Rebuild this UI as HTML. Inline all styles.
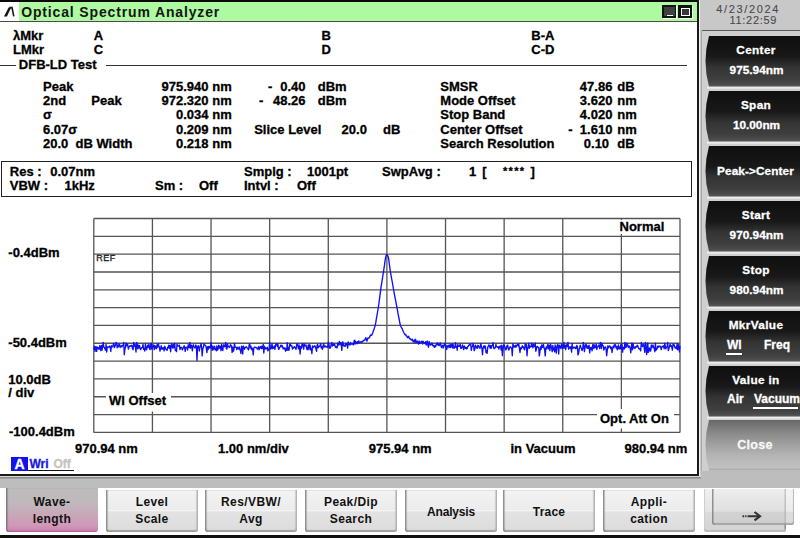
<!DOCTYPE html>
<html><head><meta charset="utf-8">
<style>
html,body{margin:0;padding:0;}
body{width:800px;height:538px;overflow:hidden;position:relative;background:#fff;font-family:"Liberation Sans",sans-serif;}
.t{position:absolute;white-space:pre;line-height:1;-webkit-text-stroke:0.3px currentColor;}
.abs{position:absolute;}
#topbar{left:0;top:0;width:697px;height:1.8px;background:#0c080c;}
#title{left:19px;top:1.8px;width:678px;height:19.4px;background:#adfaa0;}
#titleline{left:0;top:21.2px;width:697px;height:1.3px;background:#504a50;}
#icon{left:0;top:2px;width:19px;height:19px;background:#fff;}
#vborder{left:697px;top:0;width:2px;height:476px;background:#1a1a1a;}
#hborder{left:0;top:474px;width:699px;height:2px;background:#1a1a1a;}
#panel{left:699px;top:0;width:101px;height:488px;background:#c8c8c8;border-left:1px solid #f0f0f0;}
#frame{left:701px;top:30px;width:99px;height:441px;background:#cfcfcf;border-top:1.3px solid #5a5a5a;border-left:1px solid #a8a8a8;border-top-left-radius:2px;}
.sk{position:absolute;left:706px;width:94px;border-radius:14px 0 0 14px / 50% 0 0 50%;
  background:linear-gradient(#151515 0%,#1c1c1c 35%,#333 60%,#2a2a2a 85%,#4a4a4a 100%);color:#fff;text-align:center;font-weight:bold;font-size:12px;
  box-shadow:0 2px 0 #e6e6e6;}
.sk.light{background:linear-gradient(#7a7a7a 0%,#9a9a9a 35%,#b8b8b8 70%,#c4c4c4 100%);box-shadow:none;}
.sk .l1{position:absolute;left:0;right:0;top:9px;line-height:12px;}
.sk .l2{position:absolute;left:0;right:0;top:29px;line-height:12px;letter-spacing:0.3px;}
.sk .l0{position:absolute;left:0;right:0;top:19px;line-height:12px;}
.sk .l3{position:absolute;left:0;right:0;top:29px;line-height:12px;}
.sk .u{border-bottom:2px solid #fff;padding-bottom:1px;}
#band{left:0;top:476px;width:701px;height:12px;background:#bdbdbd;border-top:1px solid #dadada;box-sizing:border-box;box-shadow:inset 0 1.5px 0 #8a8a8a;}
#band2{left:701px;top:471px;width:99px;height:17px;background:#bdbdbd;}
#bottomline{left:0;top:535px;width:800px;height:3px;background:#111;}
.fb{position:absolute;top:489.5px;width:92px;height:42.5px;background:linear-gradient(#f3f3f3 0%,#ececec 47%,#f6f6f6 49%,#e3e3e3 52%,#dcdcdc 100%);
  border-radius:0 0 3px 3px;box-shadow:inset 1.5px 0 1px #8c8c8c, inset -1.5px 0 1px #b0b0b0, inset 0 -2px 1px #a0a0a0;font-weight:bold;font-size:12px;text-align:center;color:#111;}
.fb.sel{top:488px;height:43.5px;background:linear-gradient(#bdbdbd 0%,#c0b8bc 35%,#c8a8b8 60%,#d098b8 85%,#cc88b0 95%,#b85a98 100%);box-shadow:inset 1.5px 0 1px #7a7a7a;}
.fb .fl2{position:absolute;left:0;right:0;top:4.6px;line-height:17px;letter-spacing:0.4px;}
.fb.sel .fl2{top:5.8px;}
.fb .fl1{position:absolute;left:0;right:0;top:14.3px;line-height:17px;letter-spacing:0.2px;}
</style></head><body>
<div class="abs" id="topbar"></div>
<div class="abs" id="title"></div>
<div class="abs" id="icon"></div>
<div class="abs" id="titleline"></div>
<svg class="abs" style="left:0;top:0" width="20" height="22"><path d="M4 16.4 L6.9 16.4 L11.2 7.4 L8.6 7.4 Z" fill="#151515"/><path d="M9.5 7.6 L12 7.6 L13.8 16.4" fill="none" stroke="#151515" stroke-width="1.6"/></svg>
<div class="t" style="left:21.2px;top:5.2px;font-size:14px;font-weight:bold;letter-spacing:0.85px;color:#151515;-webkit-text-stroke:0">Optical Spectrum Analyzer</div>
<div class="abs" style="left:662px;top:5px;width:14px;height:12.5px;background:#111;box-shadow:1px 1px 0 #f4fff0"><div class="abs" style="left:1.5px;top:1.5px;width:11px;height:9.5px;background:#404040"></div><div class="abs" style="left:5px;top:9.8px;width:6px;height:1.5px;background:#fff"></div></div>
<div class="abs" style="left:678.3px;top:5px;width:14.2px;height:12.5px;background:#111;box-shadow:1px 1px 0 #f4fff0"><div class="abs" style="left:2.3px;top:2.8px;width:7.2px;height:6px;border:1.5px solid #fff;background:#383838"></div></div>
<div class="abs" id="vborder"></div>
<div class="abs" id="hborder"></div>
<div class="abs" id="panel"></div>
<div class="abs" id="frame"></div>
<div class="t" style="left:716.3px;top:3.6px;font-size:11px;color:#4a4a4a;letter-spacing:1.65px;-webkit-text-stroke:0.1px #4a4a4a">4/23/2024</div>
<div class="t" style="left:729.5px;top:14.9px;font-size:11px;color:#4a4a4a;letter-spacing:0.7px;-webkit-text-stroke:0.1px #4a4a4a">11:22:59</div>
<svg class="abs" style="left:0;top:0" width="800" height="538">
<defs>
<linearGradient id="gdark" x1="0" y1="0" x2="0" y2="1">
<stop offset="0" stop-color="#0f0f0f"/><stop offset="0.4" stop-color="#181818"/><stop offset="0.62" stop-color="#343434"/><stop offset="0.85" stop-color="#3e3e3e"/><stop offset="0.95" stop-color="#4a4a4a"/><stop offset="1" stop-color="#5a5a5a"/>
</linearGradient>
<linearGradient id="glight" x1="0" y1="0" x2="0" y2="1">
<stop offset="0" stop-color="#686868"/><stop offset="0.3" stop-color="#8e8e8e"/><stop offset="0.7" stop-color="#b4b4b4"/><stop offset="0.94" stop-color="#c0c0c0"/><stop offset="1" stop-color="#a8a8a8"/>
</linearGradient>
</defs>
<rect x="707" y="86.5" width="93" height="2.2" fill="#ececec"/>
<path d="M709 36 L800 36 L800 86.5 L709 86.5 Q702 61.25 709 36 Z" fill="url(#gdark)"/>
<rect x="707" y="141.5" width="93" height="2.2" fill="#ececec"/>
<path d="M709 91 L800 91 L800 141.5 L709 141.5 Q702 116.25 709 91 Z" fill="url(#gdark)"/>
<rect x="707" y="196.5" width="93" height="2.2" fill="#ececec"/>
<path d="M709 146 L800 146 L800 196.5 L709 196.5 Q702 171.25 709 146 Z" fill="url(#gdark)"/>
<rect x="707" y="251.5" width="93" height="2.2" fill="#ececec"/>
<path d="M709 201 L800 201 L800 251.5 L709 251.5 Q702 226.25 709 201 Z" fill="url(#gdark)"/>
<rect x="707" y="306.5" width="93" height="2.2" fill="#ececec"/>
<path d="M709 256 L800 256 L800 306.5 L709 306.5 Q702 281.25 709 256 Z" fill="url(#gdark)"/>
<rect x="707" y="361.5" width="93" height="2.2" fill="#ececec"/>
<path d="M709 311 L800 311 L800 361.5 L709 361.5 Q702 336.25 709 311 Z" fill="url(#gdark)"/>
<rect x="707" y="416.5" width="93" height="2.2" fill="#ececec"/>
<path d="M709 366 L800 366 L800 416.5 L709 416.5 Q702 391.25 709 366 Z" fill="url(#gdark)"/>

<path d="M709 420 L800 420 L800 470.5 L709 470.5 Q702 445.25 709 420 Z" fill="url(#glight)"/>
</svg>
<div class="t" style="left:656px;width:200px;top:45.20px;font-size:11.8px;font-weight:bold;color:#fff;text-align:center;letter-spacing:0.35px">Center</div>
<div class="t" style="left:656.5px;width:200px;top:65.20px;font-size:11.8px;font-weight:bold;color:#fff;text-align:center;">975.94nm</div>
<div class="t" style="left:656px;width:200px;top:100.20px;font-size:11.8px;font-weight:bold;color:#fff;text-align:center;letter-spacing:0.35px">Span</div>
<div class="t" style="left:656.5px;width:200px;top:120.20px;font-size:11.8px;font-weight:bold;color:#fff;text-align:center;">10.00nm</div>
<div class="t" style="left:655.5px;width:200px;top:166.00px;font-size:11.8px;font-weight:bold;color:#fff;text-align:center;letter-spacing:0.1px">Peak-&gt;Center</div>
<div class="t" style="left:656px;width:200px;top:210.20px;font-size:11.8px;font-weight:bold;color:#fff;text-align:center;letter-spacing:0.35px">Start</div>
<div class="t" style="left:656.5px;width:200px;top:230.20px;font-size:11.8px;font-weight:bold;color:#fff;text-align:center;">970.94nm</div>
<div class="t" style="left:656px;width:200px;top:265.20px;font-size:11.8px;font-weight:bold;color:#fff;text-align:center;letter-spacing:0.35px">Stop</div>
<div class="t" style="left:656.5px;width:200px;top:285.20px;font-size:11.8px;font-weight:bold;color:#fff;text-align:center;">980.94nm</div>
<div class="t" style="left:656px;width:200px;top:320.20px;font-size:11.8px;font-weight:bold;color:#fff;text-align:center;letter-spacing:0.35px">MkrValue</div>
<div class="t" style="left:727px;top:338.53px;font-size:12px;font-weight:bold;color:#fff;">Wl</div>
<div class="t" style="left:764px;top:338.53px;font-size:12px;font-weight:bold;color:#fff;">Freq</div>
<div class="abs" style="left:726px;top:352.5px;width:16px;height:2px;background:#fff"></div>
<div class="t" style="left:656px;width:200px;top:375.20px;font-size:11.8px;font-weight:bold;color:#fff;text-align:center;letter-spacing:0.35px">Value in</div>
<div class="t" style="left:727px;top:393.03px;font-size:12px;font-weight:bold;color:#fff;">Air</div>
<div class="t" style="left:754px;top:393.03px;font-size:12px;font-weight:bold;color:#fff;">Vacuum</div>
<div class="abs" style="left:753px;top:406.8px;width:45px;height:2px;background:#fff"></div>
<div class="t" style="left:655px;width:200px;top:438.62px;font-size:12.5px;font-weight:bold;color:#f6f6f6;text-align:center;letter-spacing:0.3px">Close</div>
<!-- header lines -->
<div class="abs" style="left:0;top:64.5px;width:16px;height:1px;background:#333"></div>
<div class="abs" style="left:106px;top:64.5px;width:581px;height:1px;background:#333"></div>
<!-- res box -->
<div class="abs" style="left:1.2px;top:160.6px;width:688.5px;height:34.3px;border:1.5px solid #222"></div>
<svg class="abs" style="left:0;top:0" width="700" height="474">
<g stroke="#555" stroke-width="1.3" fill="none">
<line x1="93.80" y1="218.5" x2="93.80" y2="432.4"/>
<line x1="152.42" y1="218.5" x2="152.42" y2="432.4"/>
<line x1="211.04" y1="218.5" x2="211.04" y2="432.4"/>
<line x1="269.66" y1="218.5" x2="269.66" y2="432.4"/>
<line x1="328.28" y1="218.5" x2="328.28" y2="432.4"/>
<line x1="386.90" y1="218.5" x2="386.90" y2="432.4"/>
<line x1="445.52" y1="218.5" x2="445.52" y2="432.4"/>
<line x1="504.14" y1="218.5" x2="504.14" y2="432.4"/>
<line x1="562.76" y1="218.5" x2="562.76" y2="432.4"/>
<line x1="621.38" y1="218.5" x2="621.38" y2="432.4"/>
<line x1="680.00" y1="218.5" x2="680.00" y2="432.4"/>
<line x1="93.8" y1="218.50" x2="680.0" y2="218.50"/>
<line x1="93.8" y1="236.32" x2="680.0" y2="236.32"/>
<line x1="93.8" y1="254.15" x2="680.0" y2="254.15"/>
<line x1="93.8" y1="271.98" x2="680.0" y2="271.98"/>
<line x1="93.8" y1="289.80" x2="680.0" y2="289.80"/>
<line x1="93.8" y1="307.62" x2="680.0" y2="307.62"/>
<line x1="93.8" y1="325.45" x2="680.0" y2="325.45"/>
<line x1="93.8" y1="343.27" x2="680.0" y2="343.27"/>
<line x1="93.8" y1="361.10" x2="680.0" y2="361.10"/>
<line x1="93.8" y1="378.92" x2="680.0" y2="378.92"/>
<line x1="93.8" y1="396.75" x2="680.0" y2="396.75"/>
<line x1="93.8" y1="414.57" x2="680.0" y2="414.57"/>
<line x1="93.8" y1="432.40" x2="680.0" y2="432.40"/>
</g>
<rect x="616" y="220" width="52" height="14" fill="#fff"/>
<rect x="106" y="393" width="65" height="18.5" fill="#fff"/>
<rect x="597" y="409" width="77" height="19.5" fill="#fff"/>
<polyline points="93.8,349.5 94.4,346.1 95.0,351.3 95.6,347.0 96.1,346.6 96.7,351.4 97.3,347.1 97.9,347.5 98.5,348.6 99.1,349.3 99.7,345.7 100.2,346.4 100.8,350.7 101.4,345.4 102.0,350.0 102.6,346.9 103.2,342.4 103.8,347.0 104.4,347.5 104.9,348.6 105.5,350.2 106.1,344.5 106.7,352.0 107.3,346.9 107.9,346.9 108.5,347.2 109.0,347.0 109.6,346.0 110.2,347.1 110.8,351.4 111.4,345.7 112.0,347.2 112.6,346.0 113.1,345.3 113.7,343.1 114.3,347.6 114.9,346.4 115.5,344.8 116.1,342.4 116.7,343.1 117.2,347.9 117.8,345.3 118.4,346.8 119.0,344.0 119.6,344.5 120.2,347.5 120.8,346.4 121.4,345.8 121.9,346.9 122.5,345.5 123.1,345.2 123.7,342.4 124.3,354.8 124.9,349.0 125.5,347.1 126.0,342.9 126.6,345.9 127.2,343.8 127.8,345.1 128.4,349.2 129.0,346.8 129.6,346.5 130.1,345.7 130.7,346.4 131.3,345.5 131.9,345.4 132.5,348.7 133.1,349.7 133.7,342.4 134.2,346.4 134.8,343.9 135.4,346.5 136.0,352.0 136.6,342.4 137.2,344.1 137.8,348.9 138.4,345.2 138.9,347.9 139.5,345.4 140.1,348.5 140.7,349.6 141.3,348.2 141.9,347.6 142.5,347.4 143.0,344.4 143.6,349.3 144.2,348.9 144.8,351.0 145.4,344.0 146.0,348.9 146.6,349.8 147.1,346.8 147.7,345.1 148.3,347.2 148.9,344.3 149.5,348.6 150.1,349.6 150.7,344.1 151.2,343.1 151.8,349.1 152.4,347.4 153.0,345.8 153.6,344.9 154.2,349.6 154.8,345.7 155.4,346.0 155.9,348.6 156.5,348.7 157.1,344.6 157.7,347.1 158.3,343.6 158.9,346.0 159.5,348.1 160.0,351.1 160.6,348.9 161.2,345.7 161.8,349.0 162.4,349.2 163.0,347.5 163.6,348.2 164.1,350.9 164.7,346.3 165.3,347.7 165.9,349.3 166.5,349.9 167.1,350.3 167.7,347.1 168.2,348.0 168.8,345.1 169.4,348.0 170.0,345.4 170.6,351.8 171.2,345.9 171.8,343.6 172.4,347.2 172.9,348.3 173.5,344.3 174.1,347.3 174.7,343.3 175.3,350.4 175.9,350.4 176.5,351.6 177.0,344.2 177.6,345.4 178.2,346.1 178.8,345.9 179.4,345.1 180.0,349.6 180.6,347.6 181.1,347.2 181.7,347.3 182.3,349.9 182.9,348.6 183.5,347.6 184.1,345.7 184.7,347.7 185.2,351.3 185.8,347.3 186.4,347.3 187.0,347.2 187.6,350.0 188.2,344.6 188.8,347.2 189.4,347.6 189.9,342.4 190.5,348.2 191.1,345.3 191.7,345.2 192.3,350.8 192.9,346.6 193.5,344.8 194.0,346.7 194.6,347.8 195.2,347.9 195.8,345.0 196.4,346.7 197.0,360.5 197.6,346.1 198.1,346.1 198.7,345.7 199.3,351.0 199.9,347.6 200.5,346.5 201.1,343.4 201.7,347.6 202.2,355.9 202.8,348.8 203.4,347.6 204.0,343.6 204.6,344.6 205.2,345.3 205.8,345.8 206.4,348.8 206.9,352.6 207.5,346.7 208.1,349.5 208.7,346.4 209.3,346.5 209.9,348.4 210.5,347.4 211.0,342.4 211.6,347.2 212.2,350.4 212.8,346.0 213.4,349.1 214.0,349.7 214.6,346.1 215.1,348.0 215.7,349.6 216.3,350.8 216.9,345.8 217.5,350.0 218.1,349.2 218.7,345.2 219.2,346.3 219.8,348.4 220.4,346.2 221.0,350.7 221.6,344.5 222.2,349.1 222.8,350.6 223.4,345.0 223.9,344.9 224.5,346.7 225.1,346.3 225.7,342.4 226.3,348.3 226.9,349.2 227.5,343.8 228.0,346.9 228.6,346.4 229.2,346.9 229.8,347.4 230.4,344.7 231.0,345.5 231.6,345.9 232.1,352.4 232.7,347.1 233.3,351.3 233.9,349.8 234.5,343.5 235.1,346.9 235.7,347.4 236.2,347.3 236.8,349.7 237.4,347.3 238.0,348.4 238.6,349.1 239.2,347.0 239.8,349.5 240.4,350.3 240.9,353.5 241.5,346.1 242.1,347.1 242.7,354.0 243.3,346.0 243.9,347.2 244.5,349.2 245.0,347.7 245.6,347.5 246.2,346.6 246.8,347.4 247.4,348.0 248.0,348.9 248.6,350.0 249.1,345.0 249.7,343.8 250.3,347.8 250.9,346.2 251.5,349.7 252.1,347.9 252.7,349.3 253.2,355.0 253.8,348.2 254.4,347.1 255.0,347.2 255.6,347.5 256.2,347.7 256.8,348.0 257.3,349.2 257.9,348.3 258.5,346.6 259.1,349.9 259.7,347.5 260.3,346.6 260.9,348.3 261.5,346.1 262.0,348.7 262.6,348.0 263.2,344.4 263.8,353.0 264.4,346.1 265.0,349.0 265.6,347.8 266.1,348.9 266.7,348.4 267.3,347.3 267.9,350.9 268.5,349.7 269.1,348.8 269.7,342.4 270.2,349.2 270.8,346.2 271.4,348.5 272.0,343.6 272.6,348.6 273.2,348.2 273.8,346.9 274.3,346.0 274.9,349.3 275.5,345.2 276.1,343.6 276.7,344.2 277.3,346.4 277.9,343.8 278.5,349.1 279.0,349.3 279.6,347.6 280.2,347.1 280.8,345.2 281.4,346.7 282.0,345.3 282.6,346.5 283.1,348.8 283.7,347.9 284.3,348.9 284.9,347.9 285.5,351.2 286.1,348.8 286.7,350.3 287.2,342.7 287.8,350.1 288.4,347.6 289.0,350.3 289.6,344.6 290.2,344.0 290.8,346.0 291.3,345.5 291.9,346.0 292.5,349.0 293.1,347.8 293.7,348.0 294.3,346.6 294.9,347.5 295.5,347.7 296.0,349.4 296.6,345.0 297.2,343.6 297.8,345.7 298.4,348.8 299.0,345.0 299.6,347.6 300.1,354.0 300.7,346.5 301.3,348.5 301.9,345.0 302.5,343.6 303.1,346.8 303.7,349.2 304.2,343.9 304.8,345.9 305.4,345.6 306.0,344.9 306.6,348.4 307.2,349.8 307.8,347.6 308.3,345.0 308.9,349.7 309.5,344.6 310.1,345.2 310.7,349.9 311.3,348.6 311.9,353.7 312.5,345.8 313.0,347.6 313.6,346.6 314.2,346.7 314.8,345.7 315.4,346.8 316.0,349.2 316.6,351.3 317.1,345.1 317.7,344.4 318.3,347.8 318.9,346.6 319.5,346.2 320.1,345.5 320.7,343.6 321.2,347.8 321.8,346.6 322.4,349.4 323.0,347.4 323.6,343.7 324.2,346.9 324.8,345.9 325.3,346.8 325.9,346.3 326.5,347.1 327.1,347.0 327.7,347.3 328.3,342.0 328.9,344.0 329.5,347.7 330.0,348.2 330.6,347.6 331.2,344.0 331.8,342.4 332.4,346.0 333.0,344.0 333.6,345.4 334.1,344.1 334.7,344.4 335.3,346.9 335.9,347.5 336.5,346.8 337.1,347.8 337.7,343.1 338.2,345.3 338.8,343.8 339.4,341.4 340.0,344.9 340.6,342.7 341.2,343.4 341.8,350.4 342.3,342.3 342.9,341.9 343.5,345.8 344.1,345.0 344.7,346.2 345.3,346.2 345.9,343.4 346.5,344.9 347.0,343.5 347.6,348.1 348.2,341.9 348.8,344.7 349.4,343.9 350.0,345.1 350.6,342.7 351.1,344.1 351.7,344.2 352.3,343.7 352.9,344.3 353.5,344.9 354.1,340.8 354.7,340.1 355.2,344.2 355.8,341.7 356.4,342.6 357.0,343.8 357.6,341.6 358.2,343.1 358.8,340.9 359.3,342.7 359.9,342.3 360.5,342.1 361.1,341.5 361.7,342.4 362.3,341.8 362.9,341.0 363.5,340.8 364.0,340.2 364.6,340.1 365.2,339.2 365.8,337.6 366.4,340.4 367.0,341.0 367.6,338.2 368.1,338.1 368.7,338.5 369.3,337.5 369.9,336.8 370.5,334.9 371.1,335.1 371.7,335.3 372.2,333.9 372.8,332.9 373.4,330.7 374.0,329.4 374.6,327.4 375.2,325.5 375.8,322.4 376.3,319.1 376.9,315.8 377.5,312.5 378.1,309.0 378.7,304.9 379.3,300.4 379.9,295.9 380.5,291.3 381.0,287.4 381.6,283.7 382.2,280.0 382.8,276.2 383.4,272.5 384.0,268.4 384.6,264.4 385.1,260.3 385.7,257.1 386.3,255.1 386.9,254.6 387.5,255.1 388.1,256.8 388.7,258.9 389.2,263.2 389.8,267.5 390.4,271.8 391.0,275.2 391.6,278.5 392.2,281.7 392.8,285.0 393.3,288.2 393.9,291.5 394.5,294.6 395.1,297.8 395.7,300.9 396.3,304.1 396.9,307.2 397.5,310.3 398.0,313.4 398.6,316.5 399.2,319.5 399.8,322.6 400.4,325.6 401.0,326.8 401.6,327.8 402.1,328.5 402.7,329.9 403.3,331.4 403.9,332.8 404.5,333.9 405.1,334.8 405.7,334.4 406.2,335.8 406.8,336.1 407.4,337.6 408.0,337.5 408.6,336.3 409.2,338.1 409.8,338.9 410.3,338.6 410.9,339.7 411.5,340.1 412.1,339.1 412.7,340.5 413.3,341.9 413.9,340.8 414.5,339.9 415.0,342.7 415.6,339.3 416.2,342.0 416.8,342.3 417.4,341.1 418.0,343.4 418.6,344.1 419.1,341.0 419.7,343.4 420.3,342.0 420.9,342.7 421.5,341.6 422.1,341.1 422.7,344.1 423.2,341.4 423.8,342.6 424.4,342.8 425.0,343.7 425.6,341.7 426.2,345.0 426.8,342.0 427.3,341.0 427.9,345.4 428.5,347.4 429.1,341.5 429.7,342.8 430.3,345.1 430.9,344.8 431.5,344.1 432.0,343.0 432.6,345.7 433.2,345.2 433.8,345.8 434.4,347.4 435.0,345.5 435.6,346.8 436.1,345.0 436.7,343.9 437.3,342.8 437.9,345.0 438.5,343.9 439.1,345.7 439.7,344.9 440.2,342.8 440.8,344.7 441.4,347.6 442.0,346.2 442.6,345.3 443.2,348.1 443.8,345.8 444.3,344.6 444.9,343.4 445.5,346.8 446.1,345.4 446.7,349.5 447.3,346.9 447.9,345.5 448.5,345.3 449.0,347.7 449.6,346.6 450.2,344.2 450.8,347.7 451.4,345.3 452.0,344.1 452.6,347.9 453.1,344.3 453.7,348.1 454.3,348.2 454.9,346.9 455.5,342.6 456.1,347.3 456.7,346.7 457.2,350.2 457.8,344.4 458.4,346.4 459.0,346.3 459.6,346.3 460.2,344.1 460.8,348.3 461.3,348.3 461.9,347.4 462.5,344.9 463.1,347.2 463.7,349.6 464.3,346.0 464.9,347.6 465.5,348.4 466.0,347.3 466.6,348.9 467.2,348.4 467.8,346.3 468.4,346.1 469.0,344.9 469.6,345.1 470.1,344.4 470.7,343.7 471.3,350.3 471.9,346.8 472.5,346.7 473.1,343.3 473.7,346.4 474.2,350.6 474.8,349.5 475.4,345.1 476.0,346.3 476.6,347.7 477.2,348.3 477.8,345.3 478.3,345.6 478.9,346.9 479.5,348.1 480.1,348.2 480.7,343.6 481.3,345.7 481.9,348.3 482.5,354.8 483.0,348.7 483.6,346.5 484.2,345.8 484.8,348.2 485.4,346.1 486.0,352.5 486.6,350.7 487.1,353.4 487.7,347.6 488.3,346.0 488.9,344.9 489.5,345.8 490.1,348.0 490.7,345.5 491.2,348.4 491.8,346.0 492.4,345.5 493.0,342.7 493.6,347.7 494.2,348.7 494.8,348.0 495.3,347.9 495.9,344.5 496.5,346.8 497.1,346.8 497.7,347.3 498.3,346.7 498.9,349.1 499.5,346.5 500.0,346.9 500.6,345.9 501.2,350.1 501.8,345.1 502.4,355.6 503.0,349.5 503.6,344.9 504.1,345.1 504.7,346.4 505.3,348.9 505.9,350.0 506.5,347.8 507.1,345.4 507.7,345.2 508.2,348.6 508.8,350.1 509.4,348.6 510.0,347.1 510.6,346.7 511.2,347.9 511.8,348.9 512.3,355.7 512.9,343.6 513.5,345.4 514.1,347.2 514.7,346.1 515.3,345.3 515.9,347.4 516.5,345.6 517.0,345.0 517.6,344.4 518.2,346.1 518.8,344.0 519.4,348.6 520.0,352.5 520.6,347.7 521.1,349.0 521.7,348.0 522.3,345.8 522.9,347.4 523.5,346.9 524.1,349.2 524.7,349.7 525.2,343.4 525.8,347.0 526.4,344.7 527.0,355.8 527.6,348.4 528.2,346.7 528.8,343.1 529.3,348.4 529.9,346.1 530.5,346.9 531.1,346.9 531.7,343.0 532.3,345.9 532.9,347.9 533.5,344.4 534.0,345.6 534.6,346.6 535.2,343.0 535.8,351.2 536.4,349.2 537.0,346.4 537.6,346.5 538.1,347.4 538.7,347.8 539.3,355.9 539.9,352.0 540.5,346.8 541.1,349.3 541.7,344.9 542.2,346.7 542.8,347.4 543.4,344.3 544.0,347.9 544.6,349.1 545.2,355.9 545.8,348.1 546.3,347.0 546.9,348.9 547.5,345.0 548.1,344.5 548.7,348.8 549.3,345.6 549.9,350.6 550.4,344.1 551.0,345.6 551.6,348.1 552.2,351.6 552.8,345.5 553.4,349.9 554.0,348.2 554.6,351.8 555.1,344.9 555.7,347.6 556.3,353.1 556.9,346.9 557.5,344.6 558.1,345.2 558.7,354.0 559.2,345.1 559.8,345.8 560.4,347.8 561.0,348.6 561.6,343.9 562.2,346.4 562.8,348.7 563.3,346.5 563.9,342.4 564.5,348.0 565.1,345.4 565.7,349.6 566.3,344.7 566.9,345.9 567.4,346.6 568.0,342.4 568.6,349.2 569.2,347.8 569.8,347.0 570.4,348.5 571.0,346.7 571.6,352.1 572.1,343.5 572.7,348.4 573.3,347.9 573.9,347.1 574.5,348.0 575.1,347.1 575.7,348.7 576.2,348.2 576.8,345.5 577.4,346.4 578.0,354.9 578.6,353.3 579.2,349.0 579.8,347.2 580.3,345.1 580.9,347.4 581.5,348.8 582.1,350.5 582.7,348.6 583.3,342.4 583.9,345.4 584.4,351.6 585.0,348.1 585.6,344.7 586.2,344.3 586.8,347.8 587.4,348.3 588.0,345.8 588.6,348.4 589.1,345.2 589.7,352.9 590.3,347.5 590.9,349.2 591.5,347.5 592.1,350.8 592.7,344.6 593.2,344.7 593.8,348.7 594.4,344.9 595.0,347.4 595.6,347.8 596.2,344.1 596.8,349.5 597.3,347.1 597.9,346.9 598.5,345.2 599.1,345.5 599.7,348.6 600.3,342.4 600.9,343.7 601.4,348.5 602.0,343.3 602.6,345.6 603.2,345.6 603.8,350.0 604.4,348.2 605.0,347.1 605.6,347.0 606.1,349.5 606.7,355.7 607.3,350.2 607.9,345.6 608.5,347.9 609.1,346.5 609.7,345.9 610.2,346.4 610.8,348.7 611.4,347.2 612.0,352.5 612.6,348.7 613.2,346.3 613.8,347.8 614.3,344.7 614.9,346.4 615.5,344.6 616.1,348.0 616.7,346.7 617.3,349.8 617.9,347.2 618.4,345.0 619.0,349.0 619.6,347.2 620.2,348.7 620.8,344.7 621.4,349.1 622.0,344.0 622.6,352.1 623.1,347.6 623.7,347.4 624.3,349.1 624.9,342.4 625.5,347.6 626.1,347.3 626.7,343.3 627.2,343.7 627.8,346.2 628.4,347.5 629.0,345.8 629.6,346.6 630.2,348.3 630.8,352.8 631.3,347.5 631.9,343.0 632.5,349.8 633.1,343.6 633.7,347.9 634.3,347.2 634.9,348.5 635.4,346.9 636.0,346.5 636.6,347.1 637.2,345.2 637.8,346.0 638.4,347.8 639.0,349.0 639.6,348.6 640.1,349.5 640.7,350.9 641.3,342.4 641.9,345.2 642.5,346.6 643.1,344.6 643.7,344.5 644.2,347.8 644.8,352.3 645.4,342.4 646.0,344.5 646.6,354.5 647.2,350.8 647.8,342.9 648.3,352.4 648.9,349.5 649.5,347.9 650.1,351.0 650.7,351.0 651.3,344.9 651.9,347.8 652.4,346.8 653.0,344.9 653.6,347.4 654.2,348.4 654.8,351.7 655.4,343.1 656.0,350.2 656.6,349.6 657.1,348.6 657.7,346.1 658.3,347.3 658.9,345.9 659.5,346.7 660.1,346.3 660.7,346.8 661.2,349.7 661.8,347.2 662.4,346.1 663.0,346.9 663.6,345.8 664.2,348.8 664.8,343.2 665.3,346.5 665.9,348.8 666.5,347.2 667.1,346.8 667.7,342.5 668.3,350.6 668.9,348.7 669.4,347.1 670.0,344.3 670.6,346.3 671.2,345.5 671.8,347.4 672.4,350.1 673.0,344.2 673.6,345.2 674.1,344.8 674.7,347.0 675.3,348.1 675.9,347.0 676.5,348.9 677.1,343.7 677.7,349.8 678.2,348.8 678.8,344.4 679.4,351.9 680.0,346.0" fill="none" stroke="#1010f4" stroke-width="1.35" stroke-linejoin="round"/>
</svg>
<div class="t" style="left:96.3px;top:253.8px;font-size:9px;color:#222;line-height:9px;letter-spacing:0.5px;-webkit-text-stroke:0.35px #222">REF</div>
<div class="t" style="left:619.5px;top:220.40px;font-size:13px;font-weight:bold;color:#000;">Normal</div>
<div class="t" style="left:109px;top:394.20px;font-size:13px;font-weight:bold;color:#000;">Wl Offset</div>
<div class="t" style="left:600px;top:411.70px;font-size:13px;font-weight:bold;color:#000;">Opt. Att On</div>
<div class="abs" style="left:11px;top:457px;width:17px;height:14px;background:#1010f0"></div>
<div class="t" style="left:11px;top:457px;width:17px;text-align:center;font-size:14px;font-weight:bold;color:#fff;line-height:15px">A</div>
<div class="t" style="left:29.5px;top:458px;font-size:12px;font-weight:bold;color:#1818e0;line-height:13px">Wri</div>
<div class="t" style="left:53.5px;top:458px;font-size:12px;font-weight:bold;color:#c4c4c4;line-height:13px">Off</div>
<div class="abs" style="left:27.5px;top:469.8px;width:46.5px;height:1.5px;background:#111"></div>
<div class="t" style="left:13px;top:28.90px;font-size:13px;font-weight:bold;color:#000;">λMkr</div>
<div class="t" style="left:13px;top:43.00px;font-size:13px;font-weight:bold;color:#000;">LMkr</div>
<div class="t" style="left:93.8px;top:28.90px;font-size:13px;font-weight:bold;color:#000;">A</div>
<div class="t" style="left:93.8px;top:43.00px;font-size:13px;font-weight:bold;color:#000;">C</div>
<div class="t" style="left:321.5px;top:28.90px;font-size:13px;font-weight:bold;color:#000;">B</div>
<div class="t" style="left:321.5px;top:43.00px;font-size:13px;font-weight:bold;color:#000;">D</div>
<div class="t" style="left:531.3px;top:28.90px;font-size:13px;font-weight:bold;color:#000;">B-A</div>
<div class="t" style="left:531.3px;top:43.00px;font-size:13px;font-weight:bold;color:#000;">C-D</div>
<div class="t" style="left:18.8px;top:58.40px;font-size:13px;font-weight:bold;color:#000;">DFB-LD Test</div>
<div class="t" style="left:43px;top:79.60px;font-size:13px;font-weight:bold;color:#000;">Peak</div>
<div class="t" style="left:43px;top:94.00px;font-size:13px;font-weight:bold;color:#000;">2nd</div>
<div class="t" style="left:91.3px;top:94.00px;font-size:13px;font-weight:bold;color:#000;">Peak</div>
<div class="t" style="left:43px;top:108.30px;font-size:13px;font-weight:bold;color:#000;">σ</div>
<div class="t" style="left:43px;top:122.60px;font-size:13px;font-weight:bold;color:#000;">6.07σ</div>
<div class="t" style="left:43px;top:136.90px;font-size:13px;font-weight:bold;color:#000;">20.0&nbsp; dB Width</div>
<div class="t" style="right:591.5px;top:79.60px;font-size:13px;font-weight:bold;color:#000;text-align:right;">975.940</div>
<div class="t" style="left:212.3px;top:79.60px;font-size:13px;font-weight:bold;color:#000;">nm</div>
<div class="t" style="right:591.5px;top:94.00px;font-size:13px;font-weight:bold;color:#000;text-align:right;">972.320</div>
<div class="t" style="left:212.3px;top:94.00px;font-size:13px;font-weight:bold;color:#000;">nm</div>
<div class="t" style="right:591.5px;top:108.30px;font-size:13px;font-weight:bold;color:#000;text-align:right;">0.034</div>
<div class="t" style="left:212.3px;top:108.30px;font-size:13px;font-weight:bold;color:#000;">nm</div>
<div class="t" style="right:591.5px;top:122.60px;font-size:13px;font-weight:bold;color:#000;text-align:right;">0.209</div>
<div class="t" style="left:212.3px;top:122.60px;font-size:13px;font-weight:bold;color:#000;">nm</div>
<div class="t" style="right:591.5px;top:136.90px;font-size:13px;font-weight:bold;color:#000;text-align:right;">0.218</div>
<div class="t" style="left:212.3px;top:136.90px;font-size:13px;font-weight:bold;color:#000;">nm</div>
<div class="t" style="left:268px;top:79.60px;font-size:13px;font-weight:bold;color:#000;">-</div>
<div class="t" style="right:494.5px;top:79.60px;font-size:13px;font-weight:bold;color:#000;text-align:right;">0.40</div>
<div class="t" style="left:317.7px;top:79.60px;font-size:13px;font-weight:bold;color:#000;">dBm</div>
<div class="t" style="left:259px;top:94.00px;font-size:13px;font-weight:bold;color:#000;">-</div>
<div class="t" style="right:494.5px;top:94.00px;font-size:13px;font-weight:bold;color:#000;text-align:right;">48.26</div>
<div class="t" style="left:317.7px;top:94.00px;font-size:13px;font-weight:bold;color:#000;">dBm</div>
<div class="t" style="left:254.2px;top:122.60px;font-size:13px;font-weight:bold;color:#000;">Slice Level</div>
<div class="t" style="left:341.6px;top:122.60px;font-size:13px;font-weight:bold;color:#000;">20.0</div>
<div class="t" style="left:383px;top:122.60px;font-size:13px;font-weight:bold;color:#000;">dB</div>
<div class="t" style="left:440.3px;top:79.60px;font-size:13px;font-weight:bold;color:#000;">SMSR</div>
<div class="t" style="left:440.3px;top:94.00px;font-size:13px;font-weight:bold;color:#000;">Mode Offset</div>
<div class="t" style="left:440.3px;top:108.30px;font-size:13px;font-weight:bold;color:#000;">Stop Band</div>
<div class="t" style="left:440.3px;top:122.60px;font-size:13px;font-weight:bold;color:#000;">Center Offset</div>
<div class="t" style="left:440.3px;top:136.90px;font-size:13px;font-weight:bold;color:#000;">Search Resolution</div>
<div class="t" style="right:187.60000000000002px;top:79.60px;font-size:13px;font-weight:bold;color:#000;text-align:right;">47.86</div>
<div class="t" style="left:617.3px;top:79.60px;font-size:13px;font-weight:bold;color:#000;">dB</div>
<div class="t" style="right:187.60000000000002px;top:94.00px;font-size:13px;font-weight:bold;color:#000;text-align:right;">3.620</div>
<div class="t" style="left:617.3px;top:94.00px;font-size:13px;font-weight:bold;color:#000;">nm</div>
<div class="t" style="right:187.60000000000002px;top:108.30px;font-size:13px;font-weight:bold;color:#000;text-align:right;">4.020</div>
<div class="t" style="left:617.3px;top:108.30px;font-size:13px;font-weight:bold;color:#000;">nm</div>
<div class="t" style="right:187.60000000000002px;top:122.60px;font-size:13px;font-weight:bold;color:#000;text-align:right;">1.610</div>
<div class="t" style="left:617.3px;top:122.60px;font-size:13px;font-weight:bold;color:#000;">nm</div>
<div class="t" style="right:190.89999999999998px;top:136.90px;font-size:13px;font-weight:bold;color:#000;text-align:right;">0.10</div>
<div class="t" style="left:617.3px;top:136.90px;font-size:13px;font-weight:bold;color:#000;">dB</div>
<div class="t" style="left:568.2px;top:122.60px;font-size:13px;font-weight:bold;color:#000;">-</div>
<div class="t" style="left:9.8px;top:164.70px;font-size:13px;font-weight:bold;color:#000;">Res :</div>
<div class="t" style="left:50.2px;top:164.70px;font-size:13px;font-weight:bold;color:#000;">0.07nm</div>
<div class="t" style="left:9.8px;top:178.50px;font-size:13px;font-weight:bold;color:#000;">VBW :</div>
<div class="t" style="left:64.5px;top:178.50px;font-size:13px;font-weight:bold;color:#000;">1kHz</div>
<div class="t" style="left:155px;top:178.50px;font-size:13px;font-weight:bold;color:#000;">Sm :</div>
<div class="t" style="left:199px;top:178.50px;font-size:13px;font-weight:bold;color:#000;">Off</div>
<div class="t" style="left:244px;top:164.70px;font-size:13px;font-weight:bold;color:#000;">Smplg :</div>
<div class="t" style="left:307px;top:164.70px;font-size:13px;font-weight:bold;color:#000;">1001pt</div>
<div class="t" style="left:244px;top:178.50px;font-size:13px;font-weight:bold;color:#000;">Intvl :</div>
<div class="t" style="left:297px;top:178.50px;font-size:13px;font-weight:bold;color:#000;">Off</div>
<div class="t" style="left:382px;top:164.70px;font-size:13px;font-weight:bold;color:#000;">SwpAvg :</div>
<div class="t" style="left:469px;top:164.70px;font-size:13px;font-weight:bold;color:#000;letter-spacing:1.2px">1 [</div>
<div class="t" style="left:503px;top:166.36px;font-size:11px;font-weight:bold;color:#000;letter-spacing:1.3px">****</div>
<div class="t" style="left:530.5px;top:164.70px;font-size:13px;font-weight:bold;color:#000;">]</div>
<div class="t" style="left:8.3px;top:246.20px;font-size:13px;font-weight:bold;color:#000;">-0.4dBm</div>
<div class="t" style="left:8.3px;top:335.70px;font-size:13px;font-weight:bold;color:#000;">-50.4dBm</div>
<div class="t" style="left:8.3px;top:372.70px;font-size:13px;font-weight:bold;color:#000;">10.0dB</div>
<div class="t" style="left:8.3px;top:385.60px;font-size:13px;font-weight:bold;color:#000;">/ div</div>
<div class="t" style="left:9px;top:425.20px;font-size:13px;font-weight:bold;color:#000;">-100.4dBm</div>
<div class="t" style="left:75px;top:441.60px;font-size:13px;font-weight:bold;color:#000;">970.94 nm</div>
<div class="t" style="left:218px;top:441.60px;font-size:13px;font-weight:bold;color:#000;">1.00 nm/div</div>
<div class="t" style="left:368.8px;top:441.60px;font-size:13px;font-weight:bold;color:#000;">975.94 nm</div>
<div class="t" style="left:510.5px;top:441.60px;font-size:13px;font-weight:bold;color:#000;">in Vacuum</div>
<div class="t" style="left:624.5px;top:441.60px;font-size:13px;font-weight:bold;color:#000;">980.94 nm</div>
<div class="abs" id="band"></div>
<div class="abs" id="band2"></div>
<div class="fb sel" style="left:6px"><div class="fl2">Wave-<br>length</div></div>
<div class="fb" style="left:106px"><div class="fl2">Level<br>Scale</div></div>
<div class="fb" style="left:205px"><div class="fl2">Res/VBW/<br>Avg</div></div>
<div class="fb" style="left:305px"><div class="fl2">Peak/Dip<br>Search</div></div>
<div class="fb" style="left:405px"><div class="fl1"><span style="letter-spacing:-0.2px">Analysis</span></div></div>
<div class="fb" style="left:503px"><div class="fl1">Trace</div></div>
<div class="fb" style="left:603px"><div class="fl2">Appli-<br>cation</div></div>
<div class="abs" style="left:703.5px;top:489px;width:82px;height:42.5px;background:linear-gradient(#f0f0f0 0%,#e4e4e4 52%,#dadada 54%,#d4d4d4 100%);border-radius:0 0 3px 3px;box-shadow:inset 0 -2px 1px #bdbdbd, inset -1.5px 0 0 #888, inset 1px 0 0 #d0d0d0"></div>
<div class="abs" style="left:711.5px;top:489px;width:82.5px;height:35.5px;background:linear-gradient(rgba(236,236,236,0.6) 0%,rgba(220,220,220,0.6) 62%,rgba(206,206,206,0.7) 64%,rgba(204,204,204,0.7) 100%);border-radius:0 0 3px 3px;box-shadow:inset 0 -2px 1px rgba(140,140,140,0.6), inset 1.5px 0 0 rgba(110,110,110,0.7), inset -1px 0 0 rgba(170,170,170,0.7)"></div>
<svg class="abs" style="left:740px;top:508px" width="24" height="16"><path d="M2.5 8.2 H4.2 M5.2 8.2 H6.5 M7.5 8.2 H19.5" stroke="#333" stroke-width="2" fill="none"/><path d="M14.5 4 L20 8.2 L14.5 12.4" stroke="#333" stroke-width="2.2" fill="none" stroke-linejoin="miter"/></svg>
<div class="abs" id="bottomline"></div>
</body></html>
